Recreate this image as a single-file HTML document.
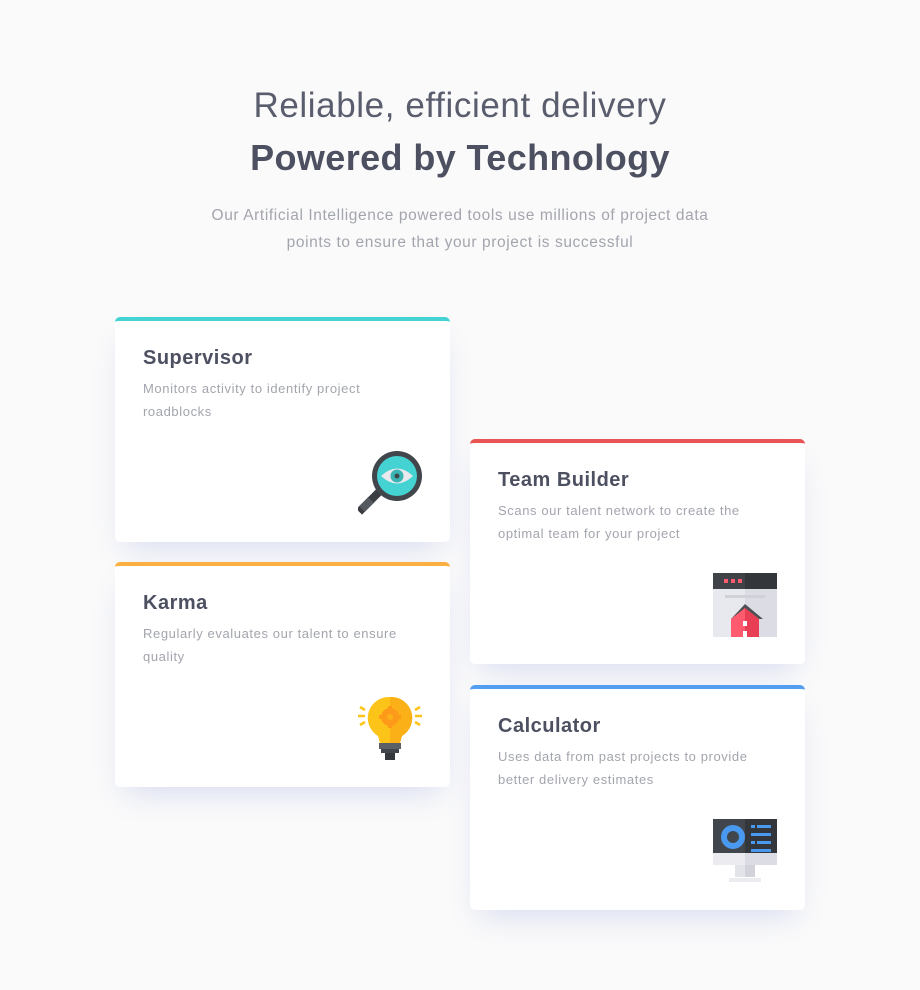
<!DOCTYPE html>
<html><head><meta charset="utf-8"><style>
*{margin:0;padding:0;box-sizing:border-box}
body{width:920px;height:990px;background:#fafafa;font-family:"Liberation Sans",sans-serif;position:relative;overflow:hidden}
h1{position:absolute;top:80px;left:0;width:920px;text-align:center;color:#4d5061;font-size:35px;line-height:52px;font-weight:400;letter-spacing:0.6px}
h1 span{color:#5a5d6d}
h1 b{display:block;font-weight:700;letter-spacing:0.4px;font-size:36px}
.lead{position:absolute;top:202px;left:200px;width:520px;text-align:center;color:#a3a5ae;font-size:15.5px;line-height:27px;letter-spacing:0.6px}
.card{position:absolute;width:335px;height:225px;background:#fff;border-radius:5px;border-top:4px solid;box-shadow:0 15px 30px -10px rgba(73,93,207,.2);padding:26px 28px}
.card h2{font-size:20px;color:#4d5061;font-weight:700;margin-bottom:8px;letter-spacing:0.5px}
.card p{font-size:13px;line-height:22.5px;color:#a3a5ae;width:265px;letter-spacing:0.6px}
.card svg{position:absolute;right:28px;bottom:27px;width:64px;height:64px}
</style></head><body>
<h1><span>Reliable, efficient delivery</span><b>Powered by Technology</b></h1>
<p class="lead">Our Artificial Intelligence powered tools use millions of project data points to ensure that your project is successful</p>

<div class="card" style="left:115px;top:317px;border-color:#44d3d2">
<h2>Supervisor</h2><p>Monitors activity to identify project roadblocks</p>
<svg viewBox="0 0 64 64"><path d="M22 40 L4 58" stroke="#3a3d42" stroke-width="8" stroke-linecap="square"/><path d="M13 49 L4 58" stroke="#555a60" stroke-width="8"/><circle cx="39" cy="25" r="25" fill="#41464c"/><circle cx="39" cy="25" r="20" fill="#44d3d2"/><path d="M23 25 Q39 10 55 25 Q39 40 23 25Z" fill="#e8e9ee"/><circle cx="39" cy="25" r="6.5" fill="#3bb5b4"/><circle cx="39" cy="25" r="2.5" fill="#41464c"/></svg>
</div>

<div class="card" style="left:115px;top:562px;border-color:#fcaf41">
<h2>Karma</h2><p>Regularly evaluates our talent to ensure quality</p>
<svg viewBox="0 0 64 64"><path d="M32 1 A21 21 0 0 0 20 40 L22 47 H42 L44 40 A21 21 0 0 0 32 1Z" fill="#fcc419"/><path d="M32 1 A21 21 0 0 1 44 40 L42 47 H32Z" fill="#fcb018"/><circle cx="32" cy="21" r="9" fill="#fd9a1a"/><path d="M30 10h4v22h-4zM21 19h22v4H21z" fill="#fd9a1a"/><circle cx="32" cy="21" r="3" fill="#fcb018"/><path d="M21 47h22v6H21z" fill="#5b6066"/><path d="M23 53h18v4H23z" fill="#42464c"/><path d="M27 57h10v7H27z" fill="#34373c"/><path d="M2 11l5 3M0 20h7M2 29l5-3M62 11l-5 3M64 20h-7M62 29l-5-3" stroke="#fcc419" stroke-width="2.5"/></svg>
</div>

<div class="card" style="left:470px;top:439px;border-color:#ea5454">
<h2>Team Builder</h2><p>Scans our talent network to create the optimal team for your project</p>
<svg viewBox="0 0 64 64"><rect x="0" y="0" width="64" height="64" fill="#e8e9ee"/><rect x="32" y="16" width="32" height="48" fill="#dcdde4"/><rect x="0" y="0" width="32" height="16" fill="#3f4348"/><rect x="32" y="0" width="32" height="16" fill="#33363b"/><rect x="11" y="6" width="4" height="4" fill="#ff5a6e"/><rect x="18" y="6" width="4" height="4" fill="#ff5a6e"/><rect x="25" y="6" width="4" height="4" fill="#ff5a6e"/><rect x="12" y="22" width="40" height="3" fill="#d0d2da"/><path d="M32 31 L50 46 L18 46Z" fill="#4d5257"/><path d="M32 35 L46 46 V64 H18 V46Z" fill="#ff5a6e"/><path d="M32 35 L46 46 V64 H32Z" fill="#e83f55"/><rect x="30" y="48" width="4" height="5" fill="#fff"/><rect x="30" y="58" width="4" height="6" fill="#fff"/></svg>
</div>

<div class="card" style="left:470px;top:685px;border-color:#549ef2">
<h2>Calculator</h2><p>Uses data from past projects to provide better delivery estimates</p>
<svg viewBox="0 0 64 64"><rect x="0" y="0" width="32" height="44" fill="#41464c"/><rect x="32" y="0" width="32" height="44" fill="#33373c"/><rect x="0" y="34" width="64" height="12" fill="#ebebf0"/><rect x="32" y="34" width="32" height="12" fill="#dcdde4"/><rect x="22" y="46" width="20" height="12" fill="#e3e4ea"/><rect x="32" y="46" width="10" height="12" fill="#d2d3da"/><rect x="16" y="59" width="32" height="4" fill="#ebebf0"/><circle cx="20" cy="18" r="9" fill="none" stroke="#4a99f0" stroke-width="6"/><rect x="38" y="6" width="4" height="3" fill="#4a99f0"/><rect x="44" y="6" width="14" height="3" fill="#4a99f0"/><rect x="38" y="14" width="20" height="3" fill="#4a99f0"/><rect x="38" y="22" width="4" height="3" fill="#4a99f0"/><rect x="44" y="22" width="14" height="3" fill="#4a99f0"/><rect x="38" y="30" width="20" height="3" fill="#4a99f0"/></svg>
</div>
</body></html>
